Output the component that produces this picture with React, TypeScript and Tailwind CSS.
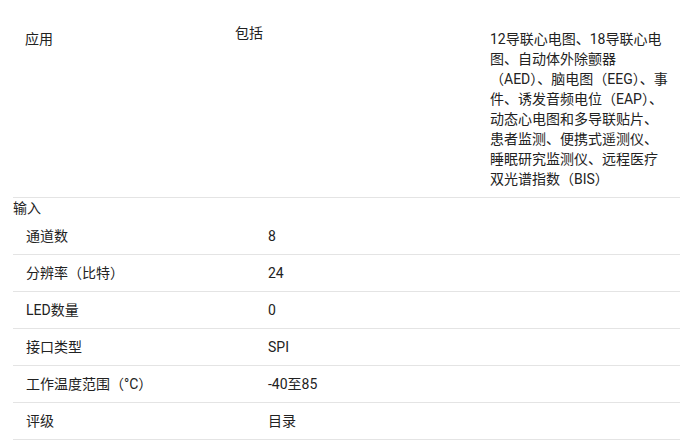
import React from "react";

interface SpecRow {
    label: string;
    value: string;
}

const specs: SpecRow[] = [
    { label: "通道数", value: "8" },
    { label: "分辨率（比特）", value: "24" },
    { label: "LED数量", value: "0" },
    { label: "接口类型", value: "SPI" },
    { label: "工作温度范围（°C）", value: "-40至85" },
    { label: "评级", value: "目录" },
];

const applications =
    "12导联心电图、18导联心电图、自动体外除颤器（AED）、脑电图（EEG）、事件、诱发音频电位（EAP）、动态心电图和多导联贴片、患者监测、便携式遥测仪、睡眠研究监测仪、远程医疗双光谱指数（BIS）";

const App: React.FC = () => {
    return (
        <div
            className="w-[685px] h-[441px] overflow-hidden bg-white text-[14px] leading-[20px] text-[#222222]"
            style={{ fontFamily: 'Roboto, "Noto Sans CJK SC", sans-serif' }}
        >
            <div className="ml-[13px] w-[667px]">
                <div className="flex border-b border-[#e4e4e4]">
                    <div className="w-[209px] pl-[12px] pt-[29px]">应用</div>
                    <div className="w-[255px] pl-[13px] pt-[23px]">包括</div>
                    <div className="w-[181px] pl-[13px] pt-[29px] pb-[8px] box-content">
                        {applications}
                    </div>
                </div>

                <div>输入</div>
                {specs.map((row) => (
                    <div
                        key={row.label}
                        className="flex items-center h-[37px] border-b border-[#e4e4e4]"
                    >
                        <div className="w-[255px] pl-[13px]">{row.label}</div>
                        <div className="flex-1">{row.value}</div>
                    </div>
                ))}
            </div>
        </div>
    );
};

export default App;
